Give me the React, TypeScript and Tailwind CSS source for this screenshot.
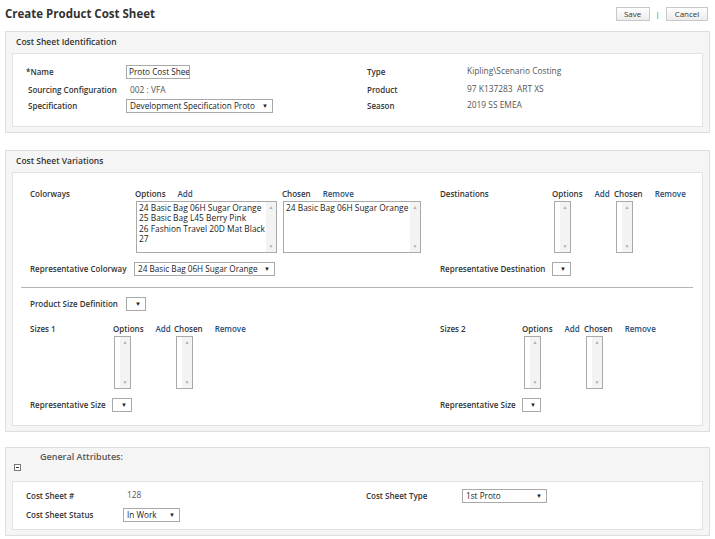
import React from "react"

const F = "font-['Open_Sans','Noto_Sans',sans-serif]"

const Label = ({ children, w }: { children: React.ReactNode; w: string }) => (
  <div className={`${w} shrink-0 text-[8px] font-semibold text-[#333] leading-[14px] whitespace-nowrap`}>{children}</div>
)

const Value = ({ children }: { children: React.ReactNode }) => (
  <div className="text-[8.4px] text-[#555] leading-[14px] whitespace-nowrap">{children}</div>
)

const Select = ({ text, w }: { text?: string; w: string }) => (
  <div
    className={`${w} h-[14px] shrink-0 border border-[#a9a9a9] bg-white flex items-center justify-between pl-[3px] pr-[4px] text-[8.2px] text-[#222]`}
  >
    <span className="whitespace-nowrap leading-none">{text}</span>
    <span className="text-[6px] leading-none text-[#222]">▼</span>
  </div>
)

const ListBox = ({ items, w, h, ml }: { items?: string[]; w: string; h: string; ml: string }) => (
  <div className={`${w} ${h} ${ml} border border-[#a9a9a9] bg-white flex mt-[2px]`}>
    <div className="flex-1 min-w-0 pl-[2px] pt-[1px] text-[8.4px] leading-[10.3px] text-[#222] whitespace-nowrap overflow-hidden">
      {items?.map((i) => (
        <div key={i}>{i}</div>
      ))}
    </div>
    <div className="w-[10px] shrink-0 bg-[#f3f3f3] flex flex-col justify-between items-center py-[3px] text-[5px] text-[#b0b0b0] leading-none">
      <span>▲</span>
      <span>▼</span>
    </div>
  </div>
)

const Column = ({
  title,
  link,
  w,
  boxW,
  boxH,
  ml,
  items,
}: {
  title: string
  link: string
  w: string
  boxW: string
  boxH: string
  ml: string
  items?: string[]
}) => (
  <div className={`${w} shrink-0`}>
    <div className="flex gap-[12px] h-[11px] items-center text-[8px] font-semibold leading-none whitespace-nowrap">
      <span className="text-[#333]">{title}</span>
      <span className="text-[#1f4e79]">{link}</span>
    </div>
    <ListBox items={items} w={boxW} h={boxH} ml={ml} />
  </div>
)

const Panel = ({ title, children }: { title: string; children: React.ReactNode }) => (
  <div className="mx-[5px] border border-[#dedede] bg-[#f5f5f5] px-[6px] pb-[5px]">
    <div className="h-[21px] flex items-center pl-[4px] text-[8.5px] font-semibold text-[#333]">{title}</div>
    <div className="bg-white border border-[#e2e2e2]">{children}</div>
  </div>
)

export default function App() {
  return (
    <div className={`${F} w-[715px] h-[539px] bg-white overflow-hidden`}>
      <div className="flex items-center justify-between h-[28px] pl-[5px] pr-[7px]">
        <h1 className="text-[11.5px] font-bold text-[#333]">Create Product Cost Sheet</h1>
        <div className="flex items-center text-[8px] text-[#333]">
          <button className="w-[34px] h-[14px] border border-[#c8c8c8] bg-gradient-to-b from-white to-[#ececec] leading-none">
            Save
          </button>
          <span className="mx-[6px] text-[#666]">|</span>
          <button className="w-[42px] h-[14px] border border-[#c8c8c8] bg-gradient-to-b from-white to-[#ececec] leading-none">
            Cancel
          </button>
        </div>
      </div>

      <div className="mt-[3px]">
        <Panel title="Cost Sheet Identification">
          <div className="pt-[11px] pb-[13px] pl-[13px] grid grid-cols-[341px_1fr]">
            <div className="flex flex-col">
              <div className="flex h-[14px]">
                <Label w="w-[100px]">*Name</Label>
                <div className="w-[64px] h-[14px] border border-[#a9a9a9] px-[2px] text-[8.2px] text-[#222] leading-[12px] overflow-hidden whitespace-nowrap">
                  Proto Cost Shee
                </div>
              </div>
              <div className="flex h-[14px] mt-[4px] pl-[2px]">
                <Label w="w-[102px]">Sourcing Configuration</Label>
                <Value>002 : VFA</Value>
              </div>
              <div className="flex h-[14px] mt-[2px] pl-[2px]">
                <Label w="w-[98px]">Specification</Label>
                <Select w="w-[147px]" text="Development Specification Proto" />
              </div>
            </div>
            <div className="flex flex-col">
              <div className="flex h-[14px]">
                <Label w="w-[100px]">Type</Label>
                <div className="-mt-[1px]">
                  <Value>Kipling\Scenario Costing</Value>
                </div>
              </div>
              <div className="flex h-[14px] mt-[4px]">
                <Label w="w-[100px]">Product</Label>
                <div className="-mt-[1px]">
                  <Value>97 K137283&nbsp; ART XS</Value>
                </div>
              </div>
              <div className="flex h-[14px] mt-[2px]">
                <Label w="w-[100px]">Season</Label>
                <div className="-mt-[1px]">
                  <Value>2019 SS EMEA</Value>
                </div>
              </div>
            </div>
          </div>
        </Panel>
      </div>

      <div className="mt-[17px]">
        <Panel title="Cost Sheet Variations">
          <div className="pt-[15px] pb-[13px] pl-[17px] pr-[8px]">
            <div className="grid grid-cols-[410px_1fr]">
              <div>
                <div className="flex">
                  <div className="w-[105px] shrink-0 text-[8px] font-semibold text-[#333] leading-[11px]">Colorways</div>
                  <Column
                    title="Options"
                    link="Add"
                    w="w-[147px]"
                    boxW="w-[141px]"
                    boxH="h-[52px]"
                    ml="ml-[1px]"
                    items={["24 Basic Bag 06H Sugar Orange", "25 Basic Bag L45 Berry Pink", "26 Fashion Travel 20D Mat Black", "27"]}
                  />
                  <Column
                    title="Chosen"
                    link="Remove"
                    w="w-[150px]"
                    boxW="w-[138px]"
                    boxH="h-[52px]"
                    ml="ml-[1px]"
                    items={["24 Basic Bag 06H Sugar Orange"]}
                  />
                </div>
                <div className="flex mt-[9px] items-center">
                  <Label w="w-[104px]">Representative Colorway</Label>
                  <Select w="w-[141px]" text="24 Basic Bag 06H Sugar Orange" />
                </div>
              </div>
              <div>
                <div className="flex">
                  <div className="w-[112px] shrink-0 text-[8px] font-semibold text-[#333] leading-[11px]">Destinations</div>
                  <Column title="Options" link="Add" w="w-[62px]" boxW="w-[17px]" boxH="h-[52px]" ml="ml-[2px]" />
                  <Column title="Chosen" link="Remove" w="w-[80px]" boxW="w-[17px]" boxH="h-[52px]" ml="ml-[2px]" />
                </div>
                <div className="flex mt-[9px] items-center">
                  <Label w="w-[112px]">Representative Destination</Label>
                  <Select w="w-[19px]" />
                </div>
              </div>
            </div>

            <div className="h-px bg-[#b5b5b5] ml-[-9px] mr-[1px] mt-[11px]" />

            <div className="flex mt-[9px] items-center">
              <Label w="w-[96px]">Product Size Definition</Label>
              <Select w="w-[20px]" />
            </div>

            <div className="grid grid-cols-[410px_1fr] mt-[12px]">
              <div>
                <div className="flex">
                  <div className="w-[83px] shrink-0 text-[8px] font-semibold text-[#333] leading-[11px]">Sizes 1</div>
                  <Column title="Options" link="Add" w="w-[61px]" boxW="w-[17px]" boxH="h-[53px]" ml="ml-[1px]" />
                  <Column title="Chosen" link="Remove" w="w-[80px]" boxW="w-[17px]" boxH="h-[53px]" ml="ml-[2px]" />
                </div>
                <div className="flex mt-[9px] items-center">
                  <Label w="w-[82px]">Representative Size</Label>
                  <Select w="w-[20px]" />
                </div>
              </div>
              <div>
                <div className="flex">
                  <div className="w-[82px] shrink-0 text-[8px] font-semibold text-[#333] leading-[11px]">Sizes 2</div>
                  <Column title="Options" link="Add" w="w-[62px]" boxW="w-[17px]" boxH="h-[53px]" ml="ml-[2px]" />
                  <Column title="Chosen" link="Remove" w="w-[80px]" boxW="w-[17px]" boxH="h-[53px]" ml="ml-[2px]" />
                </div>
                <div className="flex mt-[9px] items-center">
                  <Label w="w-[82px]">Representative Size</Label>
                  <Select w="w-[19px]" />
                </div>
              </div>
            </div>
          </div>
        </Panel>
      </div>

      <div className="mt-[15px] mx-[5px] border border-[#dedede] bg-[#f5f5f5] px-[6px] pb-[5px]">
        <div className="h-[33px]">
          <div className="pl-[28px] pt-[2px] text-[9px] font-semibold text-[#555] leading-[14px]">General Attributes:</div>
          <div className="ml-[2px] mt-[0px] w-[7px] h-[7px] border border-[#777] bg-white flex items-center justify-center">
            <div className="w-[3px] h-px bg-[#333]" />
          </div>
        </div>
        <div className="bg-white border border-[#e2e2e2] pt-[7px] pb-[7px] pl-[13px] grid grid-cols-[340px_1fr]">
          <div className="flex flex-col gap-[5px]">
            <div className="flex h-[14px]">
              <Label w="w-[97px]">Cost Sheet #</Label>
              <div className="pl-[4px] -mt-[1px]">
                <Value>128</Value>
              </div>
            </div>
            <div className="flex h-[14px]">
              <Label w="w-[97px]">Cost Sheet Status</Label>
              <Select w="w-[57px]" text="In Work" />
            </div>
          </div>
          <div className="flex h-[14px]">
            <Label w="w-[96px]">Cost Sheet Type</Label>
            <Select w="w-[85px]" text="1st Proto" />
          </div>
        </div>
      </div>
    </div>
  )
}
